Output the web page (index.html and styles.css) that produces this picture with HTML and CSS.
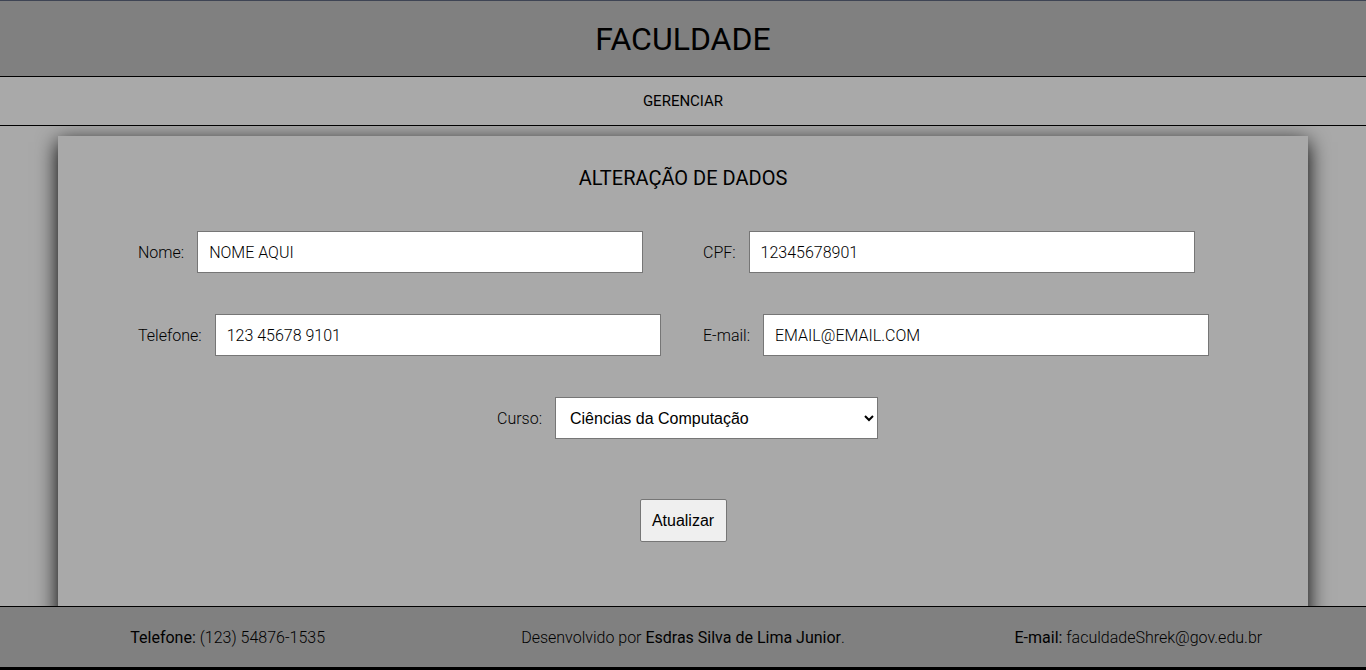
FILE: index.html
```html
<!DOCTYPE html>
<html lang="pt-BR">
<head>
<meta charset="utf-8">
<title>Faculdade - Alteração de Dados</title>
<link rel="stylesheet" href="styles.css">
</head>
<body>
  <header class="site-header">
    <h1 class="site-title">FACULDADE</h1>
  </header>
  <nav class="site-nav">
    <a class="nav-link" href="#">GERENCIAR</a>
  </nav>
  <main class="main">
    <section class="panel">
      <h2 class="panel-title">ALTERAÇÃO DE DADOS</h2>
      <form class="form">
        <div class="row">
          <div class="field field-left">
            <label class="label" for="nome">Nome:</label>
            <input class="input" id="nome" type="text" value="NOME AQUI">
          </div>
          <div class="field">
            <label class="label" for="cpf">CPF:</label>
            <input class="input" id="cpf" type="text" value="12345678901">
          </div>
        </div>
        <div class="row">
          <div class="field field-left">
            <label class="label" for="tel">Telefone:</label>
            <input class="input" id="tel" type="text" value="123 45678 9101">
          </div>
          <div class="field">
            <label class="label" for="email">E-mail:</label>
            <input class="input" id="email" type="text" value="EMAIL@EMAIL.COM">
          </div>
        </div>
        <div class="row row-center">
          <div class="field">
            <label class="label" for="curso">Curso:</label>
            <select class="select" id="curso">
              <option>Ciências da Computação</option>
              <option>Engenharia de Software</option>
              <option>Sistemas de Informação</option>
            </select>
          </div>
        </div>
        <div class="actions">
          <button class="button" type="button">Atualizar</button>
        </div>
      </form>
    </section>
  </main>
  <footer class="site-footer">
    <div class="footer-item"><strong>Telefone:</strong> (123) 54876-1535</div>
    <div class="footer-item">Desenvolvido por <strong>Esdras Silva de Lima Junior</strong>.</div>
    <div class="footer-item"><strong>E-mail:</strong> faculdadeShrek@gov.edu.br</div>
  </footer>
</body>
</html>
```

FILE: styles.css
```css
* {
  box-sizing: border-box;
}

html, body {
  margin: 0;
  padding: 0;
}

body {
  height: 100vh;
  display: flex;
  flex-direction: column;
  background: #a9a9a9;
  font-family: Roboto, "Liberation Sans", Arial, sans-serif;
  font-weight: 300;
  color: #000;
  font-size: 16px;
}

.site-header {
  flex: 0 0 auto;
  height: 77px;
  border-top: 1px solid #3e4454;
  border-bottom: 1px solid #000;
  background: #808080;
  display: flex;
  align-items: center;
  justify-content: center;
}

.site-title {
  margin: 0;
  font-size: 32px;
  font-weight: 400;
}

.site-nav {
  flex: 0 0 auto;
  height: 49px;
  border-bottom: 1px solid #000;
  background: #a9a9a9;
  display: flex;
  align-items: center;
  justify-content: center;
  position: relative;
  z-index: 1;
}

.nav-link {
  color: #000;
  text-decoration: none;
  font-size: 15px;
  font-weight: 400;
}

.main {
  flex: 1 1 auto;
  min-height: 0;
  overflow: hidden;
  padding-top: 10px;
}

.panel {
  width: 1250px;
  height: calc(100% + 40px);
  margin: 0 auto;
  background: #a9a9a9;
  box-shadow: 0 6px 20px #000;
  padding: 30px 80px 0 80px;
}

.panel-title {
  margin: 0 0 41px 0;
  text-align: center;
  font-size: 20px;
  font-weight: 400;
}

.form {
  display: flex;
  flex-direction: column;
  gap: 41px;
}

.row {
  display: flex;
  height: 42px;
}

.row-center {
  justify-content: center;
  padding-left: 9px;
}

.field {
  display: flex;
  align-items: center;
  gap: 13px;
}

.field-left {
  width: 565px;
}

.label {
  font-size: 16px;
  font-weight: 300;
}

.input {
  width: 446px;
  height: 42px;
  border: 1px solid #767676;
  border-radius: 0;
  background: #fff;
  padding: 0 11px;
  font-family: Roboto, "Liberation Sans", Arial, sans-serif;
  font-size: 16px;
  font-weight: 300;
  color: #000;
}

.select {
  width: 323px;
  height: 42px;
  border: 1px solid #767676;
  border-radius: 0;
  background: #fff;
  padding: 0 10px;
  font-family: "Liberation Sans", Arial, sans-serif;
  font-size: 16px;
  color: #000;
}

.actions {
  display: flex;
  justify-content: center;
  margin-top: 19px;
}

.button {
  width: 87px;
  height: 43px;
  border: 1px solid #767676;
  border-radius: 2px;
  background: #efefef;
  font-family: "Liberation Sans", Arial, sans-serif;
  font-size: 16px;
  color: #000;
  padding: 0;
}

.site-footer {
  flex: 0 0 auto;
  height: 64px;
  border-top: 1px solid #000;
  border-bottom: 3px solid #000;
  background: #808080;
  display: grid;
  grid-template-columns: 1fr 1fr 1fr;
  align-items: center;
  position: relative;
  z-index: 1;
}

.footer-item {
  text-align: center;
  font-size: 16px;
  font-weight: 300;
}

.footer-item strong {
  font-weight: 400;
}
```
